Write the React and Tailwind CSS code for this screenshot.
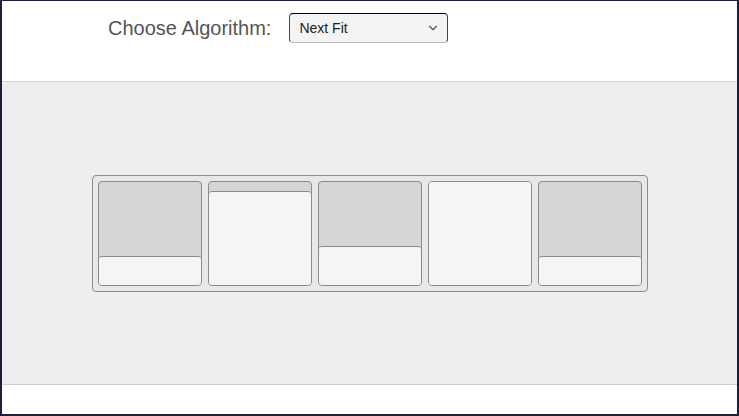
import { ChevronDown } from "lucide-react";

const blocks = [29, 94, 39, 103, 29];

function Block({ free }) {
  const full = free >= 103;
  return (
    <div className="flex h-[105px] w-[104px] flex-col overflow-hidden rounded-[4px] border border-[#8a8a8a] bg-[#d6d6d6]">
      {!full && <div className="flex-1" />}
      {full ? (
        <div className="flex-1 bg-[#f5f5f5]" />
      ) : (
        <div className="rounded-t-[3px] border-t border-[#8a8a8a] bg-[#f5f5f5]" style={{ height: free }} />
      )}
    </div>
  );
}

export default function App() {
  return (
    <div className="flex h-screen flex-col border-x-2 border-t border-b-2 border-[#1f1d3d] font-['Liberation_Sans',Arial,sans-serif]">
      <header className="flex h-[81px] items-start gap-[18px] border-b border-[#d4d4d4] bg-white pl-[106px] pt-[12px]">
        <span className="mt-[3px] text-[20px] leading-[24px] text-[#555555]">Choose Algorithm:</span>
        <div className="flex h-[30px] w-[159px] items-center justify-between rounded-[4px] border border-t-black border-x-[#444] border-b-[#bbbbbb] bg-[#f4f4f4] pl-[9px] pr-[7px]">
          <span className="text-[14px] text-[#222222]">Next Fit</span>
          <ChevronDown size={14} strokeWidth={2} className="text-[#555555]" />
        </div>
      </header>
      <main className="flex flex-1 items-center justify-center bg-[#eeeeee]">
        <div className="flex gap-[6px] rounded-[4px] border border-[#8c8c8c] bg-[#e8e8e8] p-[5px]">
          {blocks.map((f, i) => (
            <Block key={i} free={f} />
          ))}
        </div>
      </main>
      <footer className="h-[30px] border-t border-[#cfcfcf] bg-white" />
    </div>
  );
}
